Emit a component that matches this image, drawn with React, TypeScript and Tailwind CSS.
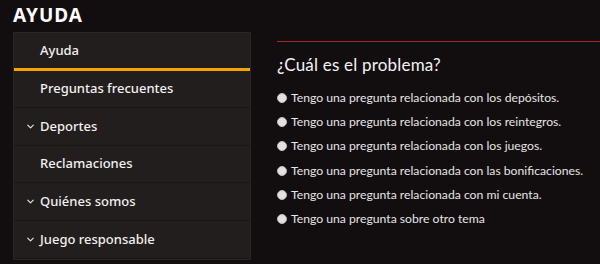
import { ChevronDown } from 'lucide-react'

const menu = [
  { label: 'Ayuda', active: true },
  { label: 'Preguntas frecuentes' },
  { label: 'Deportes', chevron: true },
  { label: 'Reclamaciones' },
  { label: 'Quiénes somos', chevron: true },
  { label: 'Juego responsable', chevron: true },
]

const options = [
  'Tengo una pregunta relacionada con los depósitos.',
  'Tengo una pregunta relacionada con los reintegros.',
  'Tengo una pregunta relacionada con los juegos.',
  'Tengo una pregunta relacionada con las bonificaciones.',
  'Tengo una pregunta relacionada con mi cuenta.',
  'Tengo una pregunta sobre otro tema',
]

export default function App() {
  return (
    <div className="w-[600px] h-[264px] overflow-hidden bg-[#120e0f] text-white font-['Noto_Sans',sans-serif]">
      <h1 className="px-[13px] pt-[2px] h-[32px] text-[19px] font-bold leading-[26px] tracking-[1px]">AYUDA</h1>
      <div className="flex">
        {/* Sidebar */}
        <div className="ml-[13px] w-[238px] bg-[#221e1e] border border-[#2a2626]">
          {menu.map(item => (
            <div
              key={item.label}
              className={
                'flex items-center h-[37.6px] border-b text-[13px] font-medium ' +
                (item.active ? 'border-b-[3px] border-[#f7a400]' : 'border-[#1a1616]')
              }
            >
              <span className="w-[26px] flex justify-end pr-[4px]">
                {item.chevron && <ChevronDown className="w-[11px] h-[11px] text-[#e8e6e6]" strokeWidth={2.5} />}
              </span>
              <span className="text-[#f2f0f0]">{item.label}</span>
            </div>
          ))}
        </div>

        {/* Content */}
        <div className="flex-1 pl-[26px] font-['Lato',sans-serif]">
          <div className="mt-[9px] h-px bg-[#a3282b]" />
          <h2 className="mt-[11px] text-[17px] leading-[24px] tracking-[0.2px] text-[#f4f2f2]">¿Cuál es el problema?</h2>
          <ul className="mt-[9px]">
            {options.map(o => (
              <li key={o} className="flex items-center gap-[4px] h-[24.2px] text-[12.2px] whitespace-nowrap text-[#e6e4e4]">
                <span className="w-[10px] h-[10px] rounded-full bg-[#e2e0e0] border border-[#bdbaba]" />
                {o}
              </li>
            ))}
          </ul>
        </div>
      </div>
    </div>
  )
}
